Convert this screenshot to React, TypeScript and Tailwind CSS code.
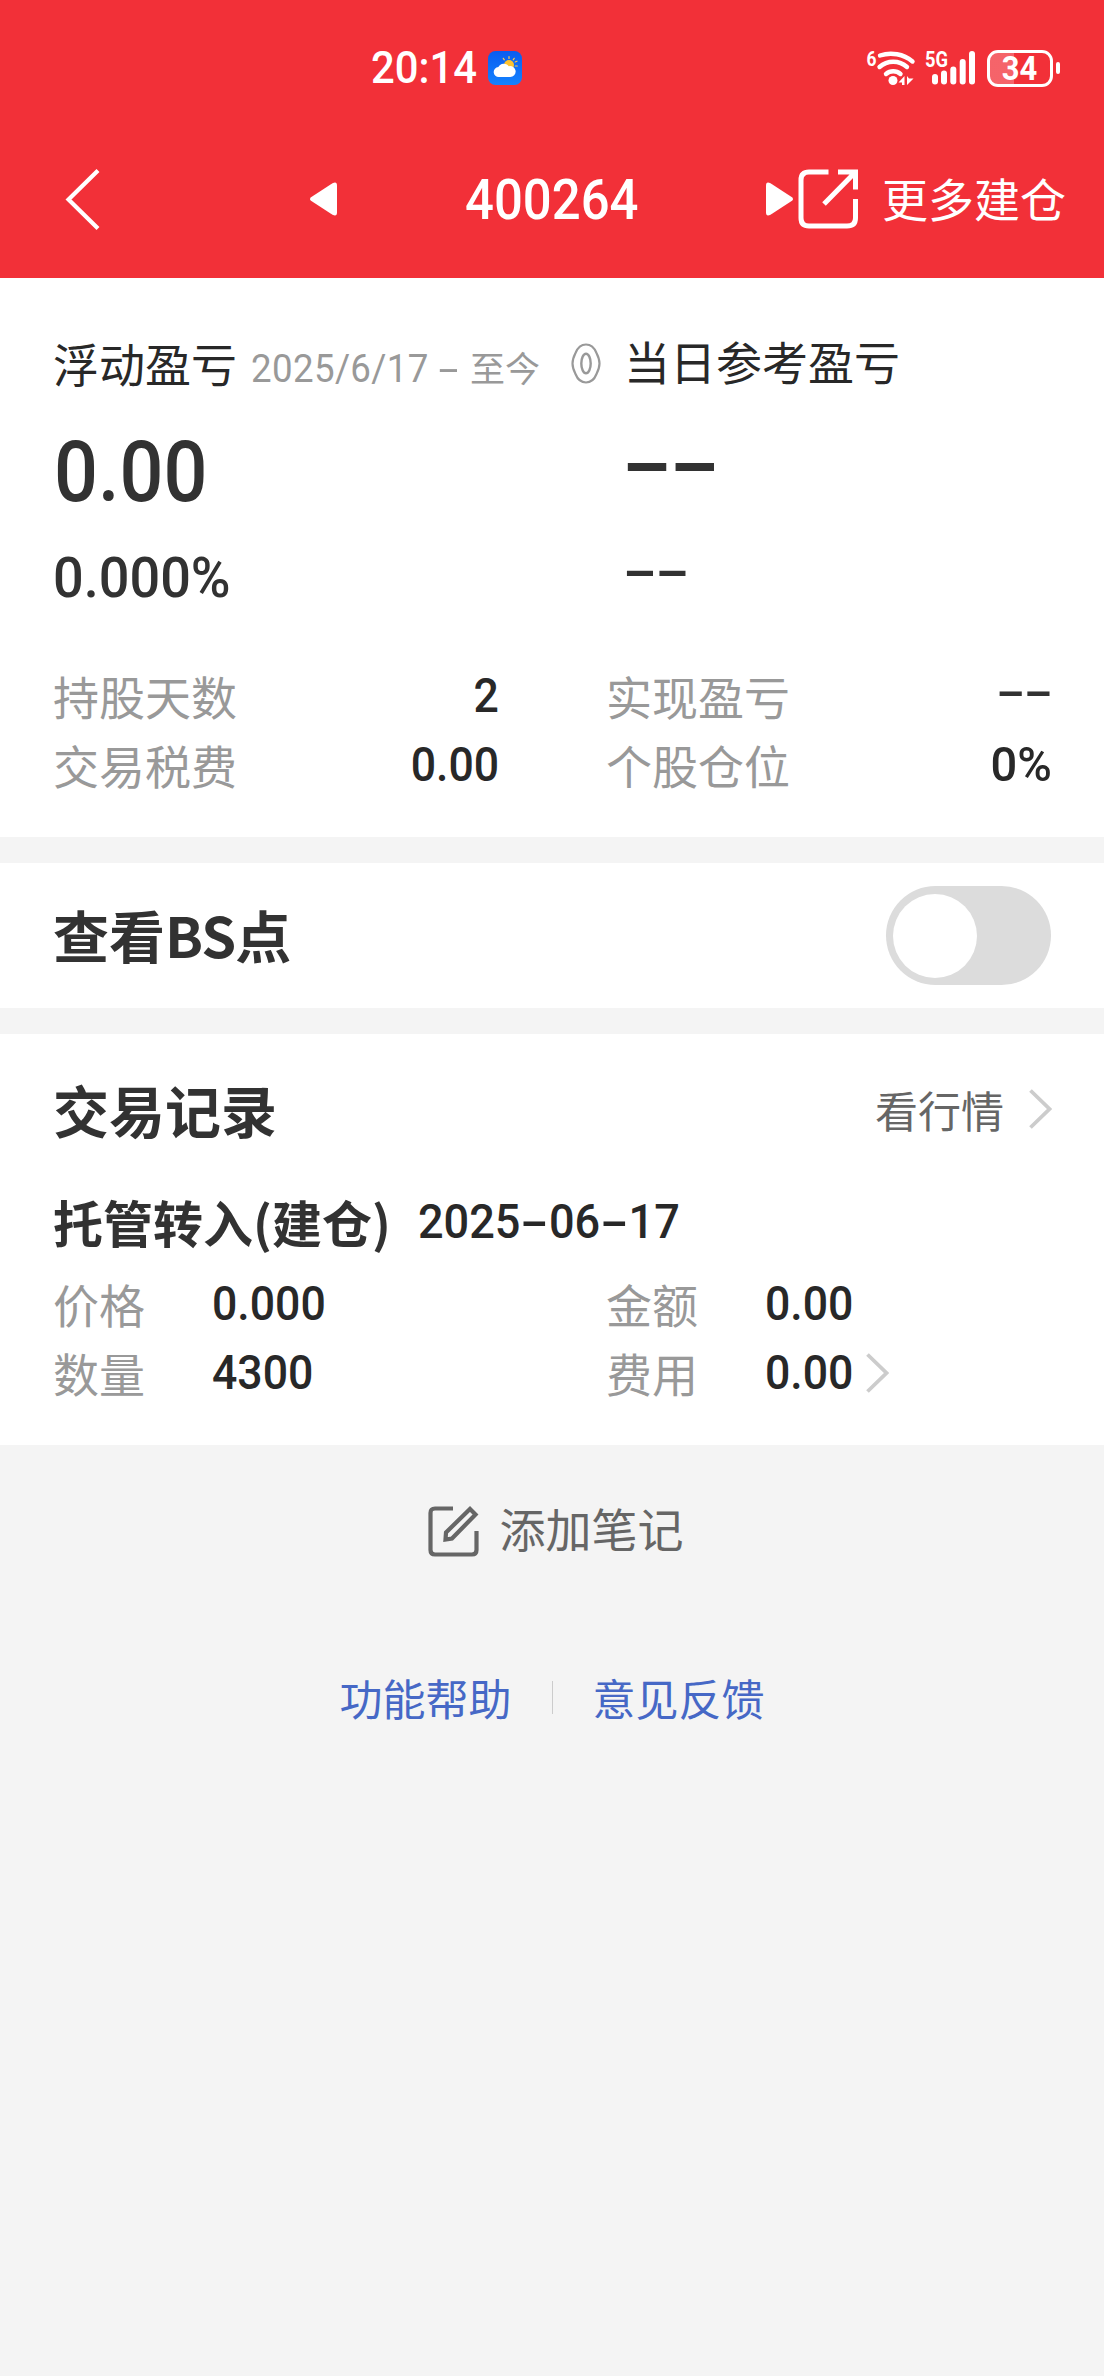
import React from 'react';
import clsx from 'clsx';

interface NumProps {
  children: React.ReactNode;
  className?: string;
}

// Figures are set slightly condensed, next to full-width Chinese labels
const Num: React.FC<NumProps> = ({ children, className }) => (
  <span className={clsx("inline-block font-['Roboto',sans-serif] font-medium leading-none whitespace-nowrap scale-x-[0.91]", className)}>
    {children}
  </span>
);

// Placeholder for a missing value
const Empty: React.FC<{ className?: string }> = ({ className }) => (
  <span className={clsx("inline-block font-['Roboto',sans-serif] font-medium leading-none tracking-[-0.018em] scale-x-[1.75]", className)}>
    --
  </span>
);

const WideDash: React.FC = () => (
  <span className="inline-block w-[0.63em] text-center scale-x-[1.85]">-</span>
);

const Chevron: React.FC<{ className?: string }> = ({ className }) => (
  <svg className={clsx('w-[23px] h-[40px] text-[#cccccc]', className)} viewBox="0 0 23 40" fill="none" stroke="currentColor" strokeWidth={3.8}>
    <path d="M1.5 1.5L20.5 20L1.5 38.5" />
  </svg>
);

const WeatherIcon: React.FC = () => (
  <svg className="w-[34px] h-[34px]" viewBox="0 0 34 34">
    <defs>
      <linearGradient id="sky" x1="0" y1="0" x2="0" y2="1">
        <stop offset="0" stopColor="#0a5cf0" />
        <stop offset="1" stopColor="#1482ff" />
      </linearGradient>
    </defs>
    <rect width="34" height="34" rx="7.5" fill="url(#sky)" />
    <g stroke="#ffc94a" strokeWidth="1.2" strokeLinecap="round">
      <path d="M21 5.5v2M26.2 7.3l-1 1.5M15.3 7.3l1 1.5M29 10.2l-1.8.8M27.3 15h2" />
    </g>
    <circle cx="21" cy="14" r="5" fill="#ffc22e" />
    <path d="M11 26a5 5 0 0 1-.6-10 6 6 0 0 1 10.3-.8 5.5 5.5 0 1 1 1.3 10.8z" fill="#fff" />
  </svg>
);

const WifiIcon: React.FC = () => (
  <svg className="w-[51px] h-[40px]" viewBox="0 0 51 40">
    <text x="0.5" y="17.5" fontSize="21" fontWeight="700" fill="#fff" textLength="10" lengthAdjust="spacingAndGlyphs" fontFamily="Roboto, sans-serif">6</text>
    <g fill="none" stroke="#fff" strokeWidth="4.4" strokeLinecap="round">
      <path d="M14 7.5A34 34 0 0 1 46.5 13.5" />
      <path d="M13.5 19A20.5 20.5 0 0 1 41 19" />
      <path d="M20 26A11 11 0 0 1 34.5 26" />
    </g>
    <circle cx="27" cy="32.5" r="4.5" fill="#fff" />
    <path d="M32.5 34.5L38.5 28V37H36V34.5zM41 28L43 30.5H47.5L41 37z" fill="#fff" />
  </svg>
);

const SignalIcon: React.FC = () => (
  <svg className="w-[52px] h-[40px]" viewBox="0 0 52 40">
    <text x="1" y="19" fontSize="22" fontWeight="700" fill="#fff" textLength="23" lengthAdjust="spacingAndGlyphs" fontFamily="Roboto, sans-serif">5G</text>
    <g fill="#fff">
      <rect x="8" y="26" width="6" height="10.5" rx="3" />
      <rect x="17" y="22.5" width="6" height="14" rx="3" />
      <rect x="26.3" y="18.5" width="6" height="18" rx="3" />
      <rect x="35.7" y="11" width="6" height="25.5" rx="3" />
      <rect x="45" y="3" width="6" height="33.5" rx="3" />
    </g>
  </svg>
);

const Battery: React.FC = () => (
  <div className="flex items-center gap-[3px]">
    <div className="flex h-[37px] w-[66px] items-center justify-center rounded-[11px] border-3 border-white bg-linear-to-r from-white/25 from-40% to-transparent to-40%">
      <Num className="text-[34px] !font-bold">34</Num>
    </div>
    <div className="h-[12px] w-[4px] rounded-full bg-white" />
  </div>
);

const StatusBar: React.FC = () => (
  <div className="flex h-[136px] items-center pl-[371px] pr-[44px]">
    <div className="w-[117px]">
      <Num className="origin-left !scale-x-[0.95] text-[44px]">20:14</Num>
    </div>
    <WeatherIcon />
    <div className="ml-auto flex items-center">
      <WifiIcon />
      <div className="ml-[7px]"><SignalIcon /></div>
      <div className="ml-[11px]"><Battery /></div>
    </div>
  </div>
);

const NavBar: React.FC = () => (
  <div className="flex h-[142px] items-center pb-4 pl-[65px] pr-[38px]">
    <svg className="h-[61px] w-[35px]" viewBox="0 0 35 61" fill="none" stroke="#fff" strokeWidth={4.2}>
      <path d="M33 1.5L3.5 30.5L33 59.5" />
    </svg>
    <svg className="ml-[210px] h-[34px] w-[27px]" viewBox="0 0 27 34" fill="#fff">
      <path d="M1 15.2L22.5 1.2Q27 -1 27 3.5V30.5Q27 35 22.5 32.8L1 18.8Q-1 17 1 15.2z" />
    </svg>
    <div className="flex flex-1 justify-center">
      <Num className="!scale-x-[0.925] translate-y-px text-[55px]">400264</Num>
    </div>
    <svg className="h-[34px] w-[27px]" viewBox="0 0 27 34" fill="#fff">
      <path d="M26 15.2L4.5 1.2Q0 -1 0 3.5V30.5Q0 35 4.5 32.8L26 18.8Q28 17 26 15.2z" />
    </svg>
    <svg className="ml-[5px] h-[60px] w-[61px]" viewBox="0 0 61 60" fill="none" stroke="#fff" strokeWidth={5}>
      <path d="M30.5 3H11Q3 3 3 11V49Q3 57 11 57H49Q57.5 57 57.5 49V30" />
      <path d="M40 3H57.5V20.5M56 4.5L26 35" />
    </svg>
    <span className="mb-[4px] ml-[23px] text-[46px] leading-none">更多建仓</span>
  </div>
);

interface StatProps {
  label: string;
  value?: string;
}

const Stat: React.FC<StatProps> = ({ label, value }) => (
  <div className="flex h-[69px] items-center justify-between">
    <span className="text-[46px] leading-none text-[#999999]">{label}</span>
    {value ? (
      <Num className={clsx('-mr-[2px] origin-right translate-y-px text-[49px] text-[#282828]', value.endsWith('%') && '!scale-x-[0.96]')}>
        {value}
      </Num>
    ) : (
      <Empty className="-mr-[2px] origin-right -translate-y-[3px] text-[49px]" />
    )}
  </div>
);

const ProfitSummary: React.FC = () => (
  <section className="bg-white pb-[39px] pl-[53px] pr-[54px] pt-[52px]">
    <div className="grid grid-cols-[571px_1fr]">
      <div className="flex h-[64px] items-center">
        <span className="text-[46px] leading-none text-[#282828]">浮动盈亏</span>
        <span className="ml-[14px] mt-[9px] flex w-[289px] items-center justify-between text-[#999999]">
          <Num className="origin-left !scale-x-[0.94] translate-y-[3px] !font-normal text-[39px] tracking-[0.01em]">2025/6/17</Num>
          <span className="flex items-center">
            <Num className="mr-[16px] !scale-x-[1.85] translate-y-[3px] !font-normal text-[39px]">-</Num>
            <span className="text-[35px] leading-none">至今</span>
          </span>
        </span>
        <svg className="ml-[31px] mt-[2px] h-[41px] w-[30px] text-[#999999]" viewBox="0 0 30 41" fill="none" stroke="currentColor">
          <path d="M15 1.5C20 1.5 23.5 5 25.5 10Q28.5 16 28.5 20.5Q28.5 25 25.5 31C23.5 36 20 39.5 15 39.5S6.5 36 4.5 31Q1.5 25 1.5 20.5Q1.5 16 4.5 10C6.5 5 10 1.5 15 1.5z" strokeWidth={2.2} strokeLinejoin="round" />
          <ellipse cx="15" cy="20.5" rx="4.7" ry="9.7" strokeWidth={2.4} />
        </svg>
      </div>
      <div className="flex h-[60px] items-center text-[46px] leading-none text-[#282828]">当日参考盈亏</div>
      <div className="flex h-[154px] items-center">
        <Num className="origin-left translate-x-px translate-y-px text-[85px]">0.00</Num>
      </div>
      <div className="flex h-[154px] items-center">
        <Empty className="-ml-[2px] origin-left -translate-y-[7px] text-[85px]" />
      </div>
      <div className="flex h-[58px] items-center">
        <Num className="origin-left !scale-x-[0.965] translate-y-px text-[56px]">0.000%</Num>
      </div>
      <div className="flex h-[58px] items-center">
        <Empty className="-ml-px origin-left -translate-y-[6px] !scale-x-[1.8] text-[56px]" />
      </div>
    </div>
    <div className="mt-[54px] grid grid-cols-2 gap-x-[109px]">
      <Stat label="持股天数" value="2" />
      <Stat label="实现盈亏" />
      <Stat label="交易税费" value="0.00" />
      <Stat label="个股仓位" value="0%" />
    </div>
  </section>
);

const BsToggle: React.FC = () => (
  <section className="mt-[26px] flex h-[145px] items-center justify-between bg-white pl-[53px] pr-[53px]">
    <h2 className="mb-[3px] text-[56px] font-bold leading-none">
      查看<span className="tracking-[-0.015em]">BS</span>点
    </h2>
    <button type="button" role="switch" aria-checked={false} aria-label="查看BS点" className="flex h-[99px] w-[165px] items-center rounded-full bg-[#dcdcdc] pl-[7px]">
      <span className="size-[84px] rounded-full bg-white" />
    </button>
  </section>
);

interface FieldProps {
  label: string;
  value: string;
  more?: boolean;
}

const Field: React.FC<FieldProps> = ({ label, value, more }) => (
  <div className="flex h-[69px] items-center">
    <span className="w-[159px] text-[46px] leading-none text-[#999999]">{label}</span>
    <Num className="origin-left translate-y-px text-[49px] text-[#282828]">{value}</Num>
    {more && <Chevron className="ml-[4px] mt-[3px]" />}
  </div>
);

const TradeRecords: React.FC = () => (
  <section className="mt-[26px] bg-white pb-[39px] pl-[53px] pr-[52px]">
    <div className="flex h-[150px] items-center justify-between">
      <h2 className="text-[56px] font-bold leading-none">交易记录</h2>
      <a className="flex items-center text-[#666666]">
        <span className="text-[43px] leading-none">看行情</span>
        <Chevron className="ml-[25px]" />
      </a>
    </div>
    <div className="flex h-[74px] items-center">
      <h3 className="text-[50px] font-bold leading-none">托管转入(建仓)</h3>
      <Num className="ml-[27px] origin-left !scale-x-[0.92] text-[49px] text-[#282828]">
        2025<WideDash />06<WideDash />17
      </Num>
    </div>
    <div className="mt-[10px] grid grid-cols-[553px_1fr]">
      <Field label="价格" value="0.000" />
      <Field label="金额" value="0.00" />
      <Field label="数量" value="4300" />
      <Field label="费用" value="0.00" more />
    </div>
  </section>
);

const Footer: React.FC = () => (
  <footer>
    <button type="button" className="flex h-[172px] w-full items-center justify-center gap-[21px] pl-[7px] text-[#666666]">
      <svg className="h-[51px] w-[51px]" viewBox="0 0 51 51" fill="none" stroke="currentColor" strokeWidth={4.2}>
        <path d="M25 2.5H7Q2.5 2.5 2.5 7V44Q2.5 48.5 7 48.5H44Q48.5 48.5 48.5 44V25" />
        <path d="M17.5 33.5L18 26.5L42 3L47.5 8.5L24 32.5z" />
      </svg>
      <span className="mb-[9px] text-[46px] leading-none">添加笔记</span>
    </button>
    <div className="flex h-[160px] items-center justify-center text-[43px] leading-none text-[#4668c6]">
      <a>功能帮助</a>
      <span className="mx-[40px] h-[33px] w-px bg-[#cccccc]" />
      <a>意见反馈</a>
    </div>
  </footer>
);

const App: React.FC = () => {
  return (
    <div className="h-[2376px] w-[1104px] overflow-hidden bg-[#f4f4f4] font-['Noto_Sans_CJK_SC',sans-serif] text-[#323232]">
      <header className="bg-[#f23038] text-white">
        <StatusBar />
        <NavBar />
      </header>
      <main>
        <ProfitSummary />
        <BsToggle />
        <TradeRecords />
      </main>
      <Footer />
    </div>
  );
};

export default App;
